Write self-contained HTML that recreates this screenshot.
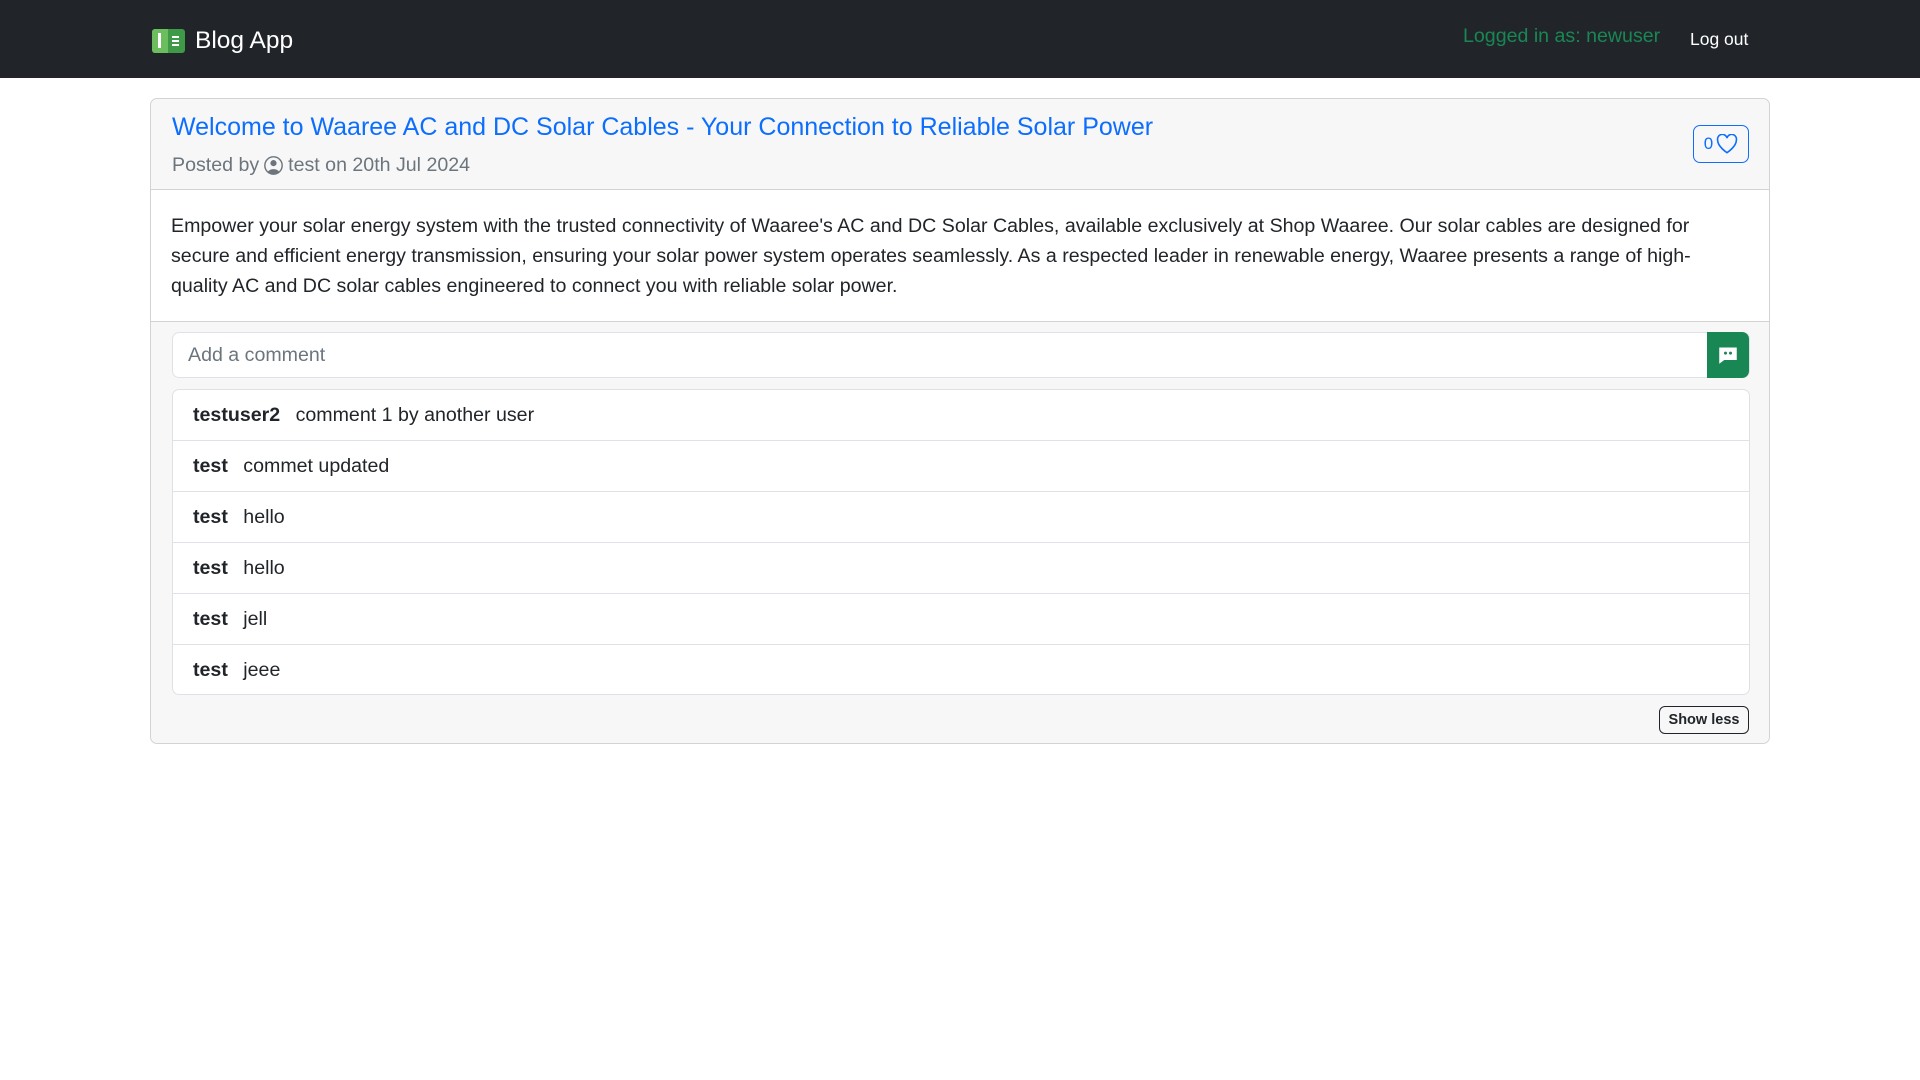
<!DOCTYPE html>
<html><head><meta charset="utf-8"><style>
*{box-sizing:border-box;margin:0;padding:0}
body{width:1920px;height:1080px;background:#fff;font-family:"Liberation Sans",sans-serif;color:#212529;font-size:19.6px;position:relative;overflow:hidden}
.nav{position:absolute;left:0;top:0;width:1920px;height:78px;background:#212529}
.brand{position:absolute;left:152px;top:27px;color:#fff;font-size:24.5px;display:flex;align-items:center}
.logo{width:33px;height:24px;background:#3e9a47;border-radius:3px;margin-right:10px;position:relative}
.logo:before{content:"";position:absolute;left:0;top:0;width:16px;height:24px;background:#6cbd5e;border-radius:3px 0 0 3px}
.logo i{position:absolute;left:6px;top:4px;width:3px;height:15px;background:#fff}
.logo b{position:absolute;left:20px;top:7px;width:7px;height:2px;background:#fff;box-shadow:0 4px 0 #fff,0 8px 0 #fff}
.user{position:absolute;left:1463px;top:25px;color:#198754;font-size:19.6px}
.out{position:absolute;left:1690px;top:29px;color:#fff;font-size:17.5px}
.card{position:absolute;left:150px;top:98px;width:1620px;height:646px;border:1px solid #d3d3d3;border-radius:7px;background:#f7f7f7;overflow:hidden}
.head{height:91px;border-bottom:1px solid #d3d3d3;position:relative}
.title{position:absolute;left:21px;top:14px;font-size:25px;color:#0d6efd}
.meta{position:absolute;left:21px;top:55px;color:#6c757d;font-size:19.6px;display:flex;align-items:center}
.meta svg{margin:0 5px}
.like{position:absolute;left:1542px;top:26px;width:56px;height:38px;border:1.5px solid #0d6efd;border-radius:7px;color:#0d6efd;font-size:17px;display:flex;align-items:center;justify-content:center;gap:3px}
.body{background:#fff;height:132px;border-bottom:1px solid #d3d3d3;padding:21px 20px 0;line-height:30px;font-size:19.6px}
.inp{position:absolute;left:21px;top:233px;width:1578px;height:46px;border:1px solid #dee2e6;border-radius:7px;background:#fff;color:#6c757d;padding:0 0 0 15px;line-height:44px}
.send{position:absolute;right:0;top:-1px;width:42px;height:46px;background:#198754;border-radius:0 7px 7px 0;display:flex;align-items:center;justify-content:center}
.list{position:absolute;left:21px;top:290px;width:1578px;height:306px;border:1px solid #dee2e6;border-radius:7px;background:#fff}
.row{height:51px;border-bottom:1px solid #dee2e6;padding-left:20px;line-height:50px}
.row:last-child{border-bottom:none}
.row b{margin-right:10px}
.less{position:absolute;left:1508px;top:607px;width:90px;height:28px;border:1px solid #212529;border-radius:6px;font-size:14.5px;font-weight:bold;text-align:center;line-height:26px}
</style></head><body>
<div class="nav">
<div class="brand"><div class="logo"><i></i><b></b></div>Blog App</div>
<div class="user">Logged in as: newuser</div>
<div class="out">Log out</div>
</div>
<div class="card">
<div class="head">
<div class="title">Welcome to Waaree AC and DC Solar Cables - Your Connection to Reliable Solar Power</div>
<div class="meta">Posted by <svg width="19" height="19" viewBox="0 0 16 16"><circle cx="8" cy="8" r="7.3" fill="none" stroke="#6c757d" stroke-width="1.2"/><circle cx="8" cy="6" r="2.6" fill="#6c757d"/><path d="M3.3 13a5.5 4 0 0 1 9.4 0A7 7 0 0 1 3.3 13z" fill="#6c757d"/></svg> test on 20th Jul 2024</div>
<div class="like">0<svg width="22" height="20" viewBox="0 0 16 15"><path d="M8 14S1 9.5 1 4.8A3.4 3.4 0 0 1 8 3a3.4 3.4 0 0 1 7 1.8C15 9.5 8 14 8 14z" fill="none" stroke="#0d6efd" stroke-width="1.2"/></svg></div>
</div>
<div class="body">Empower your solar energy system with the trusted connectivity of Waaree's AC and DC Solar Cables, available exclusively at Shop Waaree. Our solar cables are designed for<br>secure and efficient energy transmission, ensuring your solar power system operates seamlessly. As a respected leader in renewable energy, Waaree presents a range of high-<br>quality AC and DC solar cables engineered to connect you with reliable solar power.</div>
<div class="inp">Add a comment<div class="send"><svg width="20" height="20" viewBox="0 0 16 16"><path d="M1 2h14v10H5l-4 3z" fill="#fff"/><circle cx="6" cy="6.5" r="1.2" fill="#198754"/><circle cx="10" cy="6.5" r="1.2" fill="#198754"/></svg></div></div>
<div class="list">
<div class="row"><b>testuser2</b> comment 1 by another user</div>
<div class="row"><b>test</b> commet updated</div>
<div class="row"><b>test</b> hello</div>
<div class="row"><b>test</b> hello</div>
<div class="row"><b>test</b> jell</div>
<div class="row"><b>test</b> jeee</div>
</div>
<div class="less">Show less</div>
</div>
</body></html>
